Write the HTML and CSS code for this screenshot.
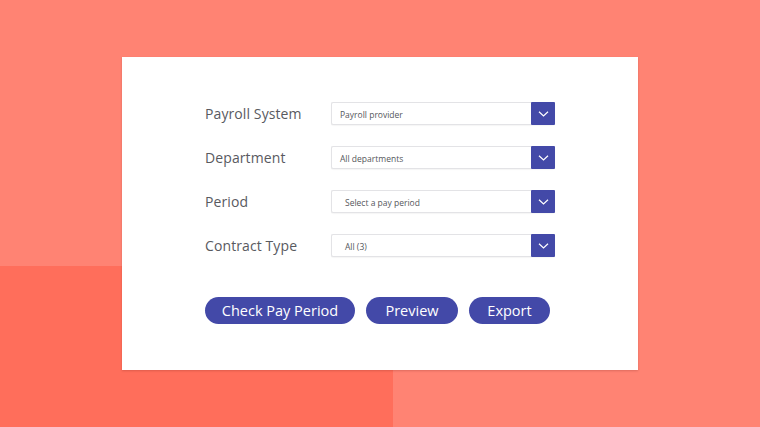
FILE: index.html
```html
<!DOCTYPE html>
<html>
<head>
<meta charset="utf-8">
<link rel="stylesheet" href="styles.css">
</head>
<body>
<div class="stage">
  <div class="card">
    <div class="rows">
      <div class="row">
        <span class="label">Payroll System</span>
        <div class="select"><span class="value v1">Payroll provider</span><span class="caret"><svg width="11" height="6" viewBox="0 0 11 6"><path d="M1 0.8 L5.5 5 L10 0.8" fill="none" stroke="#fff" stroke-width="1.2"/></svg></span></div>
      </div>
      <div class="row">
        <span class="label">Department</span>
        <div class="select"><span class="value v1">All departments</span><span class="caret"><svg width="11" height="6" viewBox="0 0 11 6"><path d="M1 0.8 L5.5 5 L10 0.8" fill="none" stroke="#fff" stroke-width="1.2"/></svg></span></div>
      </div>
      <div class="row">
        <span class="label">Period</span>
        <div class="select"><span class="value v2">Select a pay period</span><span class="caret"><svg width="11" height="6" viewBox="0 0 11 6"><path d="M1 0.8 L5.5 5 L10 0.8" fill="none" stroke="#fff" stroke-width="1.2"/></svg></span></div>
      </div>
      <div class="row">
        <span class="label">Contract Type</span>
        <div class="select"><span class="value v2">All (3)</span><span class="caret"><svg width="11" height="6" viewBox="0 0 11 6"><path d="M1 0.8 L5.5 5 L10 0.8" fill="none" stroke="#fff" stroke-width="1.2"/></svg></span></div>
      </div>
    </div>
    <div class="actions">
      <button class="btn b1">Check Pay Period</button>
      <button class="btn b2">Preview</button>
      <button class="btn b3">Export</button>
    </div>
  </div>
</div>
</body>
</html>
```
FILE: styles.css
```css
html, body {
  margin: 0;
  padding: 0;
}
body {
  width: 760px;
  height: 427px;
  overflow: hidden;
  font-family: "Open Sans", "Liberation Sans", sans-serif;
  background:
    linear-gradient(#ff6e5b, #ff6e5b) 0 266px / 393px 161px no-repeat,
    #ff8373;
}
.stage {
  height: 427px;
  display: flex;
  align-items: center;
  justify-content: center;
}
.card {
  width: 516px;
  height: 313px;
  box-sizing: border-box;
  background: #ffffff;
  box-shadow: 0 1px 2px rgba(120, 40, 30, 0.25);
  padding: 45px 0 0 83px;
}
.rows {
  display: flex;
  flex-direction: column;
  gap: 21px;
}
.row {
  display: flex;
  align-items: center;
  height: 23px;
}
.label {
  width: 126px;
  font-size: 14px;
  color: #595a5f;
  letter-spacing: 0.1px;
}
.select {
  width: 224px;
  height: 23px;
  display: flex;
  box-sizing: border-box;
  border: 1px solid #e3e3e6;
  border-right: none;
  border-radius: 2px;
  background: #fff;
  box-shadow: 0 1px 1px rgba(0, 0, 0, 0.04);
}
.value {
  flex: 1;
  font-size: 8.5px;
  color: #55575c;
  line-height: 24px;
}
.v1 { padding-left: 8px; }
.v2 { padding-left: 13px; }
.caret {
  width: 24px;
  height: 23px;
  margin-top: -1px;
  background: #4349a8;
  border-radius: 1px;
  display: flex;
  align-items: center;
  justify-content: center;
}
.actions {
  display: flex;
  gap: 11px;
  margin-top: 40px;
}
.btn {
  height: 27px;
  border: none;
  border-radius: 14px;
  background: #4349a8;
  color: #fff;
  font-family: "Open Sans", "Liberation Sans", sans-serif;
  font-size: 14.5px;
  padding: 0;
}
.b1 { width: 150px; }
.b2 { width: 92px; }
.b3 { width: 81px; }
```
